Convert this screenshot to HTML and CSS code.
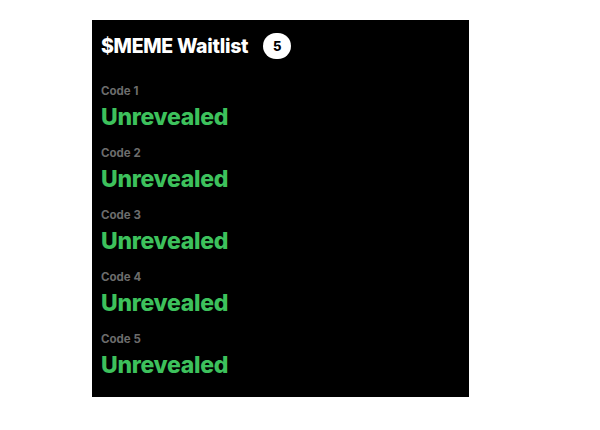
FILE: index.html
```html
<!DOCTYPE html>
<html>
<head>
<meta charset="utf-8">
<link rel="stylesheet" href="styles.css">
</head>
<body>
<div class="panel">
  <div class="header">
    <span class="title">$MEME Waitlist</span>
    <span class="badge">5</span>
  </div>
  <div class="list">
    <div class="item"><div class="label">Code 1</div><div class="value">Unrevealed</div></div>
    <div class="item"><div class="label">Code 2</div><div class="value">Unrevealed</div></div>
    <div class="item"><div class="label">Code 3</div><div class="value">Unrevealed</div></div>
    <div class="item"><div class="label">Code 4</div><div class="value">Unrevealed</div></div>
    <div class="item"><div class="label">Code 5</div><div class="value">Unrevealed</div></div>
  </div>
</div>
</body>
</html>
```
FILE: styles.css
```css
html, body { margin: 0; padding: 0; background: #fff; }
body { font-family: Inter, "Noto Sans", sans-serif; }
.panel {
  margin: 20px 0 0 92px;
  width: 377px;
  height: 377px;
  box-sizing: border-box;
  background: #000;
  padding: 12px 9px 0 9px;
}
.header { display: flex; align-items: center; gap: 15px; height: 28px; }
.title { color: #fff; font-weight: 800; font-size: 19.5px; letter-spacing: -0.3px; }
.badge {
  width: 28px; height: 26px; border-radius: 13px; background: #fff; color: #000;
  font-weight: 800; font-size: 13px; display: flex; align-items: center; justify-content: center;
}
.list { display: flex; flex-direction: column; gap: 15px; margin-top: 24px; }
.item { display: flex; flex-direction: column; gap: 5px; }
.label { color: #6c6c6c; font-weight: 700; font-size: 11.5px; line-height: 14px; }
.value { color: #3dc15c; font-weight: 800; font-size: 23px; line-height: 28px; letter-spacing: -0.3px; }
```
